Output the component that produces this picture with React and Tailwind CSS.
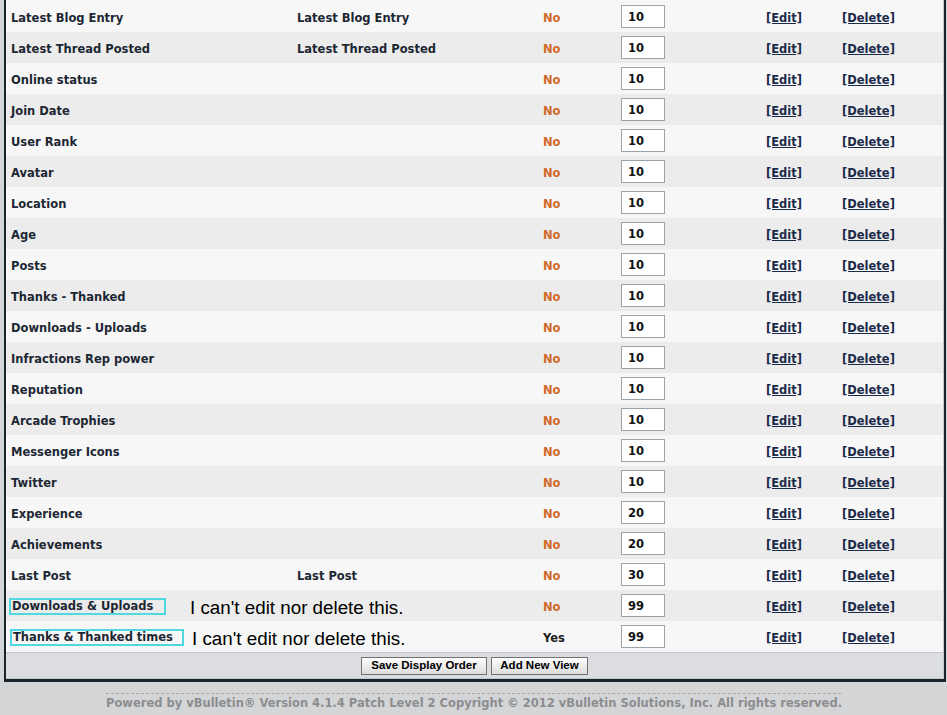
import React from "react";

const rows = [
  ["Latest Blog Entry", "Latest Blog Entry", "No", "10"],
  ["Latest Thread Posted", "Latest Thread Posted", "No", "10"],
  ["Online status", "", "No", "10"],
  ["Join Date", "", "No", "10"],
  ["User Rank", "", "No", "10"],
  ["Avatar", "", "No", "10"],
  ["Location", "", "No", "10"],
  ["Age", "", "No", "10"],
  ["Posts", "", "No", "10"],
  ["Thanks - Thanked", "", "No", "10"],
  ["Downloads - Uploads", "", "No", "10"],
  ["Infractions Rep power", "", "No", "10"],
  ["Reputation", "", "No", "10"],
  ["Arcade Trophies", "", "No", "10"],
  ["Messenger Icons", "", "No", "10"],
  ["Twitter", "", "No", "10"],
  ["Experience", "", "No", "20"],
  ["Achievements", "", "No", "20"],
  ["Last Post", "Last Post", "No", "30"],
  ["Downloads & Uploads", null, "No", "99", "w-[157px] ml-[3px]", "ml-[24px]"],
  ["Thanks & Thanked times", null, "Yes", "99", "w-[174px] ml-[4px]", "ml-[8px]"],
];

function Row({ r, i }) {
  const [a, b, c, d, boxCls, noteCls] = r;
  const bg = i % 2 === 0 ? "bg-[#f7f7f7]" : "bg-[#ececec]";
  return (
    <div className={`grid grid-cols-[291px_246px_78px_145px_76px_1fr] h-[31px] items-center ${bg}`}>
      {b === null ? (
        <div className="col-span-2 flex items-center mt-[2px]">
          <div className={`h-[17px] border-2 border-[#4fd8df] flex items-center pl-[1px] ${boxCls}`}>
            <span className="leading-none">{a}</span>
          </div>
          <span
            className={`font-normal text-[18.8px] text-black leading-none mt-[4px] ${noteCls}`}
            style={{ fontFamily: '"Liberation Sans", Arial, sans-serif' }}
          >
            I can't edit nor delete this.
          </span>
        </div>
      ) : (
        <>
          <div className="pl-[5px] mt-[4px]">{a}</div>
          <div className="mt-[4px]">{b}</div>
        </>
      )}
      <div className={`mt-[4px] ${c === "No" ? "text-[#d0692a]" : "text-[#1d1d1d]"}`}>{c}</div>
      <div>
        <div className="w-[44px] h-[23px] border border-[#9aa3ab] bg-white flex items-center pl-[6px] pt-[3px] text-[#111]">
          {d}
        </div>
      </div>
      <div className="mt-[4px]">
        <a className="underline text-[#1c2a4a] cursor-pointer">[Edit]</a>
      </div>
      <div className="mt-[4px]">
        <a className="underline text-[#1c2a4a] cursor-pointer">[Delete]</a>
      </div>
    </div>
  );
}

export default function App() {
  return (
    <div
      className="w-[947px] h-[715px] bg-[#d4d5d7] overflow-hidden text-[11.5px] font-bold text-[#1c2733]"
      style={{ fontFamily: '"DejaVu Sans", Verdana, sans-serif' }}
    >
      <div className="ml-[4px] w-[942px] border-x-2 border-b-[3px] border-[#17242a]">
        <div className="border-r border-[#c6cacd]">
          <div className="pt-px bg-[#f7f7f7]">
            {rows.map((r, i) => (
              <Row key={i} r={r} i={i} />
            ))}
          </div>
          <div className="h-[27px] bg-[#dcdde0] border-t border-[#c2c6ca] border-b border-b-[#c2c6ca] flex items-center justify-center gap-[4px]">
            <button
              className="h-[18px] w-[126px] border border-[#707070] bg-gradient-to-b from-white to-[#dcdcdc] text-[11.5px] font-bold text-black leading-none"
              style={{ fontFamily: '"Liberation Sans", Arial, sans-serif' }}
            >
              Save Display Order
            </button>
            <button
              className="h-[18px] w-[97px] border border-[#707070] bg-gradient-to-b from-white to-[#dcdcdc] text-[11.5px] font-bold text-black leading-none"
              style={{ fontFamily: '"Liberation Sans", Arial, sans-serif' }}
            >
              Add New View
            </button>
          </div>
        </div>
      </div>
      <div className="mt-[11px] mx-auto w-[735px] border-t border-dashed border-[#a8a9ab] pt-[1px] text-center text-[#8c8d8f] text-[11.5px] whitespace-nowrap">
        Powered by vBulletin® Version 4.1.4 Patch Level 2 Copyright © 2012 vBulletin Solutions, Inc. All rights reserved.
      </div>
    </div>
  );
}
